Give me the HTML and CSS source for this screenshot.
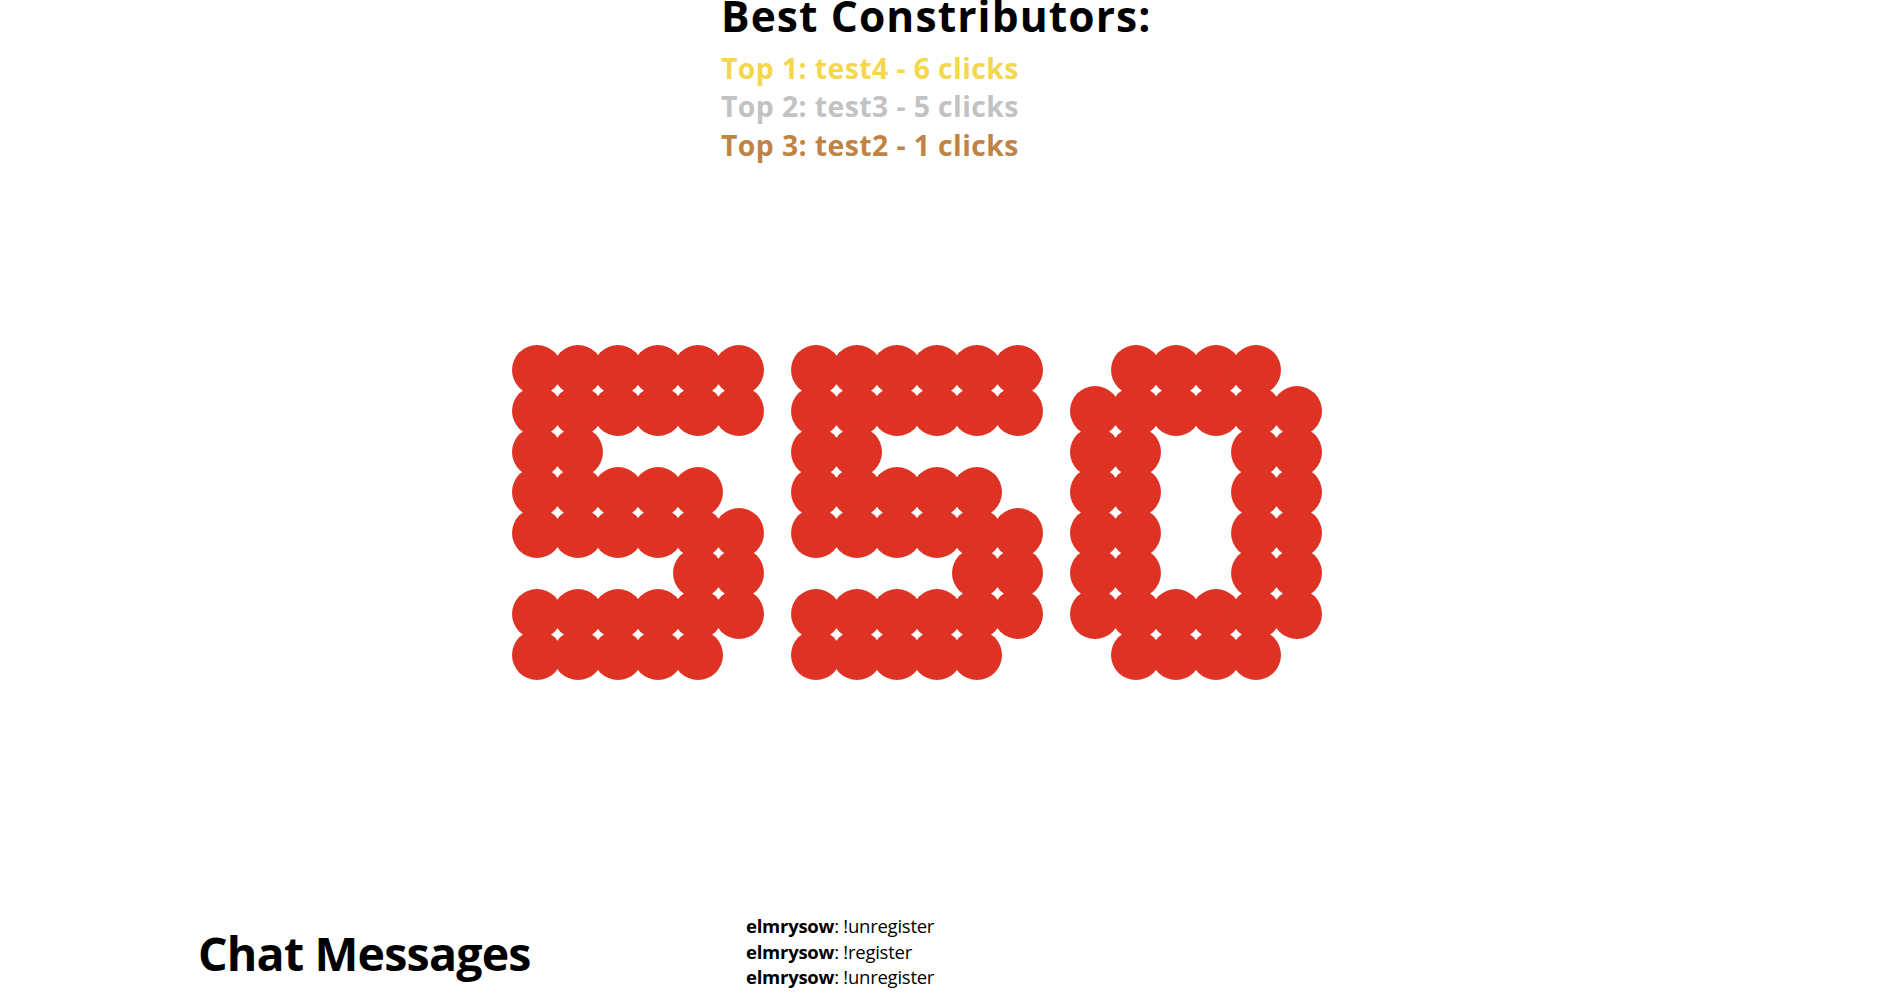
FILE: index.html
```html
<!DOCTYPE html>
<html lang="en">
<head>
<meta charset="utf-8">
<title>Clicks</title>
<link rel="stylesheet" href="styles.css">
</head>
<body>
<section class="leaderboard">
  <h1 class="lb-title">Best Constributors:</h1>
  <p class="lb-row gold">Top 1: test4 - 6 clicks</p>
  <p class="lb-row silver">Top 2: test3 - 5 clicks</p>
  <p class="lb-row bronze">Top 3: test2 - 1 clicks</p>
</section>

<section class="counter">
  <div class="digit">
    <i class="d"></i><i class="d"></i><i class="d"></i><i class="d"></i><i class="d"></i><i class="d"></i>
    <i class="d"></i><i class="d"></i><i class="d"></i><i class="d"></i><i class="d"></i><i class="d"></i>
    <i class="d"></i><i class="d"></i><i></i><i></i><i></i><i></i>
    <i class="d"></i><i class="d"></i><i class="d"></i><i class="d"></i><i class="d"></i><i></i>
    <i class="d"></i><i class="d"></i><i class="d"></i><i class="d"></i><i class="d"></i><i class="d"></i>
    <i></i><i></i><i></i><i></i><i class="d"></i><i class="d"></i>
    <i class="d"></i><i class="d"></i><i class="d"></i><i class="d"></i><i class="d"></i><i class="d"></i>
    <i class="d"></i><i class="d"></i><i class="d"></i><i class="d"></i><i class="d"></i><i></i>
  </div>
  <div class="digit">
    <i class="d"></i><i class="d"></i><i class="d"></i><i class="d"></i><i class="d"></i><i class="d"></i>
    <i class="d"></i><i class="d"></i><i class="d"></i><i class="d"></i><i class="d"></i><i class="d"></i>
    <i class="d"></i><i class="d"></i><i></i><i></i><i></i><i></i>
    <i class="d"></i><i class="d"></i><i class="d"></i><i class="d"></i><i class="d"></i><i></i>
    <i class="d"></i><i class="d"></i><i class="d"></i><i class="d"></i><i class="d"></i><i class="d"></i>
    <i></i><i></i><i></i><i></i><i class="d"></i><i class="d"></i>
    <i class="d"></i><i class="d"></i><i class="d"></i><i class="d"></i><i class="d"></i><i class="d"></i>
    <i class="d"></i><i class="d"></i><i class="d"></i><i class="d"></i><i class="d"></i><i></i>
  </div>
  <div class="digit">
    <i></i><i class="d"></i><i class="d"></i><i class="d"></i><i class="d"></i><i></i>
    <i class="d"></i><i class="d"></i><i class="d"></i><i class="d"></i><i class="d"></i><i class="d"></i>
    <i class="d"></i><i class="d"></i><i></i><i></i><i class="d"></i><i class="d"></i>
    <i class="d"></i><i class="d"></i><i></i><i></i><i class="d"></i><i class="d"></i>
    <i class="d"></i><i class="d"></i><i></i><i></i><i class="d"></i><i class="d"></i>
    <i class="d"></i><i class="d"></i><i></i><i></i><i class="d"></i><i class="d"></i>
    <i class="d"></i><i class="d"></i><i class="d"></i><i class="d"></i><i class="d"></i><i class="d"></i>
    <i></i><i class="d"></i><i class="d"></i><i class="d"></i><i class="d"></i><i></i>
  </div>
</section>

<section class="chat">
  <h2 class="chat-title">Chat Messages</h2>
  <ul class="chat-list">
    <li><b>elmrysow</b>: !unregister</li>
    <li><b>elmrysow</b>: !register</li>
    <li><b>elmrysow</b>: !unregister</li>
  </ul>
</section>
</body>
</html>
```

FILE: styles.css
```css
html, body {
  margin: 0;
  padding: 0;
  background: #ffffff;
}

body {
  font-family: "Open Sans", "Noto Sans", sans-serif;
  color: #000000;
  overflow: hidden;
}

.leaderboard {
  padding-left: 721px;
}

.lb-title {
  margin: 0 0 17.4px 0;
  font-size: 42.5px;
  line-height: 31.6px;
  font-weight: 700;
  letter-spacing: 1.1px;
}

.lb-row {
  margin: 0;
  font-size: 28.4px;
  line-height: 38.5px;
  font-weight: 700;
  letter-spacing: 0.4px;
}

.gold { color: #f4d74c; }
.silver { color: #c2c2c2; }
.bronze { color: #bf8443; }

.counter {
  display: flex;
  gap: 37.2px;
  padding-left: 512.3px;
  margin-top: 181px;
}

.digit {
  display: grid;
  grid-template-columns: repeat(6, 40.3px);
  grid-auto-rows: 40.6px;
}

.digit i {
  display: block;
  width: 50px;
  height: 50px;
}

.digit i.d {
  border-radius: 50%;
  background: #de3324;
}

.chat {
  display: flex;
  align-items: flex-start;
  padding-left: 198px;
  margin-top: 243px;
}

.chat-title {
  width: 548px;
  margin: 11.6px 0 0 0;
  font-size: 46.5px;
  line-height: 56px;
  font-weight: 700;
  letter-spacing: -0.8px;
}

.chat-list {
  list-style: none;
  margin: 0;
  padding: 0;
  font-size: 18.5px;
  line-height: 25.5px;
  letter-spacing: -0.25px;
}

.chat-list b {
  font-weight: 700;
}
```
